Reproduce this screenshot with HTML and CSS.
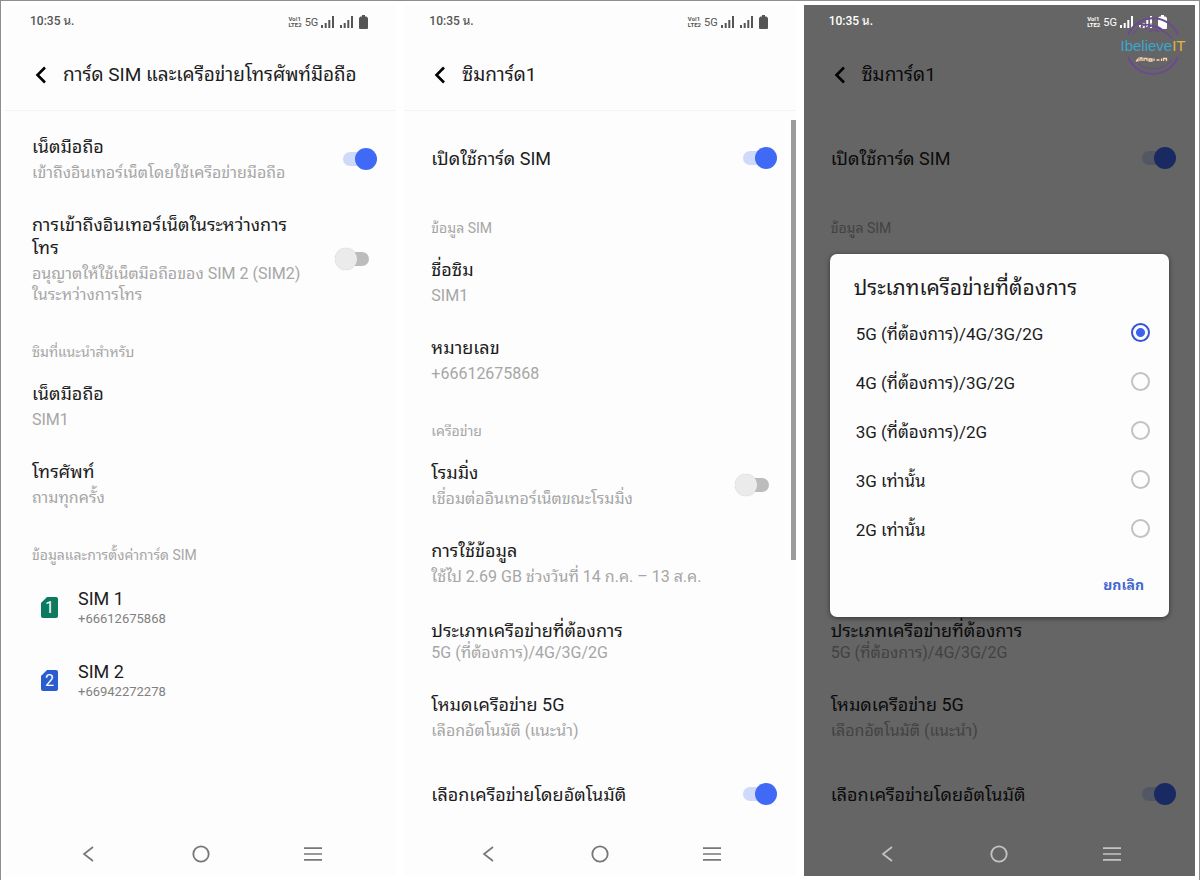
FILE: index.html
```html
<!DOCTYPE html>
<html lang="th">
<head>
<meta charset="utf-8">
<meta name="viewport" content="width=device-width, initial-scale=1">
<title>การ์ด SIM และเครือข่ายโทรศัพท์มือถือ</title>
<link rel="stylesheet" href="styles.css">
</head>
<body>
<svg class="defs" aria-hidden="true">
  <symbol id="i-signal" viewBox="0 0 13 12"><path d="M0 9h2v3H0zM3.700 7h2v5h-2zM7.300 4h2v8h-2zM11 0h2v12h-2z"/></symbol>
  <symbol id="i-battery" viewBox="0 0 9 14"><path d="M3 0h3v1.500h1.500L9 3v10q0 1-1 1H1q-1 0-1-1V3l1.500-1.500H3z"/></symbol>
  <symbol id="i-back" viewBox="0 0 12 18"><path d="M10 1.500 2.500 9l7.500 7.500" fill="none" stroke="currentColor" stroke-width="2.600"/></symbol>
  <symbol id="i-nav-back" viewBox="0 0 12 16"><path d="M11 1 2 8l9 7" fill="none" stroke="currentColor" stroke-width="1.700"/></symbol>
  <symbol id="i-nav-home" viewBox="0 0 18 18"><circle cx="9" cy="9" r="7.700" fill="none" stroke="currentColor" stroke-width="1.800"/></symbol>
  <symbol id="i-nav-menu" viewBox="0 0 18 14"><path d="M0 1.200h18M0 7h18M0 12.800h18" fill="none" stroke="currentColor" stroke-width="1.700"/></symbol>
  <symbol id="i-sim" viewBox="0 0 17 21"><path d="M6 0h9q2 0 2 2v17q0 2-2 2H2q-2 0-2-2V6z"/></symbol>
</svg>
<main class="frame">

  <section class="phone">
    <div class="status"><span class="clock">10:35 น.</span><span class="signals"><span class="volte"><span>Vo⁞1</span><span>LTE2</span></span><span class="net">5G</span><svg class="bars"><use href="#i-signal"/></svg><svg class="bars bars-2"><use href="#i-signal"/></svg><svg class="battery"><use href="#i-battery"/></svg></span></div>
    <header class="head"><button class="back" aria-label="กลับ"><svg><use href="#i-back"/></svg></button><h1>การ์ด SIM และเครือข่ายโทรศัพท์มือถือ</h1></header>
    <div class="list">
      <label class="row"><span class="texts"><span class="title">เน็ตมือถือ</span><span class="sub">เข้าถึงอินเทอร์เน็ตโดยใช้เครือข่ายมือถือ</span></span><input class="switch" type="checkbox" checked></label>
      <label class="row"><span class="texts"><span class="title">การเข้าถึงอินเทอร์เน็ตในระหว่างการ<br>โทร</span><span class="sub">อนุญาตให้ใช้เน็ตมือถือของ SIM 2 (SIM2)<br>ในระหว่างการโทร</span></span><input class="switch" type="checkbox"></label>
      <h2 class="group">ซิมที่แนะนำสำหรับ</h2>
      <div class="row"><span class="texts"><span class="title">เน็ตมือถือ</span><span class="sub">SIM1</span></span></div>
      <div class="row"><span class="texts"><span class="title">โทรศัพท์</span><span class="sub">ถามทุกครั้ง</span></span></div>
      <h2 class="group">ข้อมูลและการตั้งค่าการ์ด SIM</h2>
      <div class="sim sim-green"><span class="chip"><svg><use href="#i-sim"/></svg><span>1</span></span><span class="texts"><span class="title">SIM 1</span><span class="number">+66612675868</span></span></div>
      <div class="sim sim-blue"><span class="chip"><svg><use href="#i-sim"/></svg><span>2</span></span><span class="texts"><span class="title">SIM 2</span><span class="number">+66942272278</span></span></div>
    </div>
    <nav class="nav"><button aria-label="ย้อนกลับ"><svg class="n-back"><use href="#i-nav-back"/></svg></button><button aria-label="หน้าแรก"><svg class="n-home"><use href="#i-nav-home"/></svg></button><button aria-label="เมนู"><svg class="n-menu"><use href="#i-nav-menu"/></svg></button></nav>
  </section>

  <section class="phone">
    <div class="status"><span class="clock">10:35 น.</span><span class="signals"><span class="volte"><span>Vo⁞1</span><span>LTE2</span></span><span class="net">5G</span><svg class="bars"><use href="#i-signal"/></svg><svg class="bars bars-2"><use href="#i-signal"/></svg><svg class="battery"><use href="#i-battery"/></svg></span></div>
    <header class="head"><button class="back" aria-label="กลับ"><svg><use href="#i-back"/></svg></button><h1>ซิมการ์ด1</h1></header>
    <div class="list">
      <label class="row single"><span class="texts"><span class="title">เปิดใช้การ์ด SIM</span></span><input class="switch" type="checkbox" checked></label>
      <h2 class="group">ข้อมูล SIM</h2>
      <div class="row"><span class="texts"><span class="title">ชื่อซิม</span><span class="sub">SIM1</span></span></div>
      <div class="row"><span class="texts"><span class="title">หมายเลข</span><span class="sub">+66612675868</span></span></div>
      <h2 class="group">เครือข่าย</h2>
      <label class="row"><span class="texts"><span class="title">โรมมิ่ง</span><span class="sub">เชื่อมต่ออินเทอร์เน็ตขณะโรมมิ่ง</span></span><input class="switch" type="checkbox"></label>
      <div class="row"><span class="texts"><span class="title">การใช้ข้อมูล</span><span class="sub">ใช้ไป 2.69 GB ช่วงวันที่ 14 ก.ค. – 13 ส.ค.</span></span></div>
      <div class="row compact"><span class="texts"><span class="title">ประเภทเครือข่ายที่ต้องการ</span><span class="sub">5G (ที่ต้องการ)/4G/3G/2G</span></span></div>
      <div class="row"><span class="texts"><span class="title">โหมดเครือข่าย 5G</span><span class="sub">เลือกอัตโนมัติ (แนะนำ)</span></span></div>
      <label class="row single"><span class="texts"><span class="title">เลือกเครือข่ายโดยอัตโนมัติ</span></span><input class="switch" type="checkbox" checked></label>
      <div class="scrollbar"></div>
    </div>
    <nav class="nav"><button aria-label="ย้อนกลับ"><svg class="n-back"><use href="#i-nav-back"/></svg></button><button aria-label="หน้าแรก"><svg class="n-home"><use href="#i-nav-home"/></svg></button><button aria-label="เมนู"><svg class="n-menu"><use href="#i-nav-menu"/></svg></button></nav>
  </section>

  <section class="phone dimmed">
    <div class="status"><span class="clock">10:35 น.</span><span class="signals"><span class="volte"><span>Vo⁞1</span><span>LTE2</span></span><span class="net">5G</span><svg class="bars"><use href="#i-signal"/></svg><svg class="bars bars-2"><use href="#i-signal"/></svg><svg class="battery"><use href="#i-battery"/></svg></span></div>
    <header class="head"><button class="back" aria-label="กลับ"><svg><use href="#i-back"/></svg></button><h1>ซิมการ์ด1</h1></header>
    <div class="list">
      <label class="row single"><span class="texts"><span class="title">เปิดใช้การ์ด SIM</span></span><input class="switch" type="checkbox" checked></label>
      <h2 class="group">ข้อมูล SIM</h2>
      <div class="dialog" role="dialog" aria-labelledby="dlg-title">
        <h2 id="dlg-title">ประเภทเครือข่ายที่ต้องการ</h2>
        <label class="option"><span>5G (ที่ต้องการ)/4G/3G/2G</span><input type="radio" name="net" checked></label>
        <label class="option"><span>4G (ที่ต้องการ)/3G/2G</span><input type="radio" name="net"></label>
        <label class="option"><span>3G (ที่ต้องการ)/2G</span><input type="radio" name="net"></label>
        <label class="option"><span>3G เท่านั้น</span><input type="radio" name="net"></label>
        <label class="option"><span>2G เท่านั้น</span><input type="radio" name="net"></label>
        <button class="cancel">ยกเลิก</button>
      </div>
      <div class="row compact"><span class="texts"><span class="title">ประเภทเครือข่ายที่ต้องการ</span><span class="sub">5G (ที่ต้องการ)/4G/3G/2G</span></span></div>
      <div class="row"><span class="texts"><span class="title">โหมดเครือข่าย 5G</span><span class="sub">เลือกอัตโนมัติ (แนะนำ)</span></span></div>
      <label class="row single"><span class="texts"><span class="title">เลือกเครือข่ายโดยอัตโนมัติ</span></span><input class="switch" type="checkbox" checked></label>
    </div>
    <nav class="nav"><button aria-label="ย้อนกลับ"><svg class="n-back"><use href="#i-nav-back"/></svg></button><button aria-label="หน้าแรก"><svg class="n-home"><use href="#i-nav-home"/></svg></button><button aria-label="เมนู"><svg class="n-menu"><use href="#i-nav-menu"/></svg></button></nav>
    <div class="scrim"></div>
    <div class="logo">
      <svg viewBox="0 0 70 64" aria-hidden="true">
        <g fill="none" stroke="#6b4a91" stroke-width="2">
          <path d="M10 21A27 27 0 0 1 60 21M10 43A27 27 0 0 0 60 43"/>
          <path d="M14 22A22 22 0 0 1 34 10M16 45A23 23 0 0 0 54 45" stroke-width="1"/>
          <path d="M27 15q8-7 18 1M31 18q5-4 10 0M20 10q20 0 34 14" stroke-width="1.500"/>
        </g>
        <path d="M18 47.500l2-2.500v2.500M22 47v-3h2v3M26 47v-2.500h3v2.500M31 45h3v2h-3zM36 44.500v2.500M38.500 46h3M43.500 44.500v2.500M45.500 47v-2.500h3v2.500" fill="none" stroke="#f5d3b2" stroke-width="1.300"/>
      </svg>
      <span class="brand">Ibelieve<b>IT</b></span>
    </div>
  </section>
</main>
</body>
</html>
```
FILE: styles.css
```css
* { box-sizing: border-box; }

body {
  margin: 0;
  background: #fff;
  color: #1c1c1c;
  font-family: Roboto, "Noto Sans Thai Looped", "Noto Looped Thai", "Droid Sans Thai", "Noto Sans Thai", "Noto Sans", sans-serif;
}

h1, h2 { margin: 0; font-weight: 400; }

button {
  padding: 0;
  border: 0;
  background: none;
  color: inherit;
  font: inherit;
}

svg { display: block; fill: currentColor; }
.defs { position: absolute; width: 0; height: 0; }

.frame {
  display: grid;
  grid-template-columns: repeat(3, minmax(0, 1fr));
  gap: 8px;
  min-height: 100vh;
  padding: 4px;
  border: 1px solid #8e8e8e;
}

.phone {
  position: relative;
  display: flex;
  flex-direction: column;
  background: #fdfdfd;
}

/* Status bar */
.status {
  display: flex;
  align-items: center;
  justify-content: space-between;
  height: 34px;
  padding: 0 28px 0 25px;
  color: #555;
  font-size: 12px;
  font-weight: 500;
}
.clock { line-height: 16px; padding-bottom: 2px; }
.signals { display: flex; align-items: center; }
.volte {
  display: grid;
  font-size: 6px;
  font-weight: 700;
  line-height: 6px;
  margin-right: 3px;
}
.net { font-size: 11px; font-weight: 400; margin-right: 3px; }
.bars { width: 13px; height: 12px; }
.bars-2 { margin: 0 6px; }
.battery { width: 9px; height: 14px; }

/* Title bar */
.head {
  display: flex;
  align-items: center;
  gap: 16px;
  height: 72px;
  padding: 0 30px;
  border-bottom: 1px solid #f3f3f3;
}
.back svg { width: 12px; height: 18px; color: #000; }
.head h1 {
  font-size: 19px;
  line-height: 28px;
  white-space: nowrap;
}

/* Settings list */
.list {
  position: relative;
  flex: 1;
  padding-top: 9px;
}
.row {
  display: flex;
  align-items: center;
  justify-content: space-between;
  padding: 15px 27px;
}
.texts { display: flex; flex-direction: column; gap: 4px; white-space: nowrap; }
.title { font-size: 18px; line-height: 23px; }
.sub { color: #a6a6a6; font-size: 16px; line-height: 21px; }
.single { height: 76px; }
.compact { padding: 17px 27px 15px; }
.compact .texts { gap: 0; }
.group {
  padding: 22px 27px 4px;
  color: #a6a6a6;
  font-size: 14px;
  line-height: 21px;
}

.switch {
  appearance: none;
  position: relative;
  flex: none;
  width: 26px;
  height: 14px;
  margin: 0;
  border-radius: 7px;
  background: #bcbcbc;
}
.switch::before {
  content: "";
  position: absolute;
  top: -4px;
  left: -8px;
  width: 22px;
  height: 22px;
  border-radius: 50%;
  background: #ebebeb;
  box-shadow: 0 0 1px #bbb;
}
.switch:checked { background: #cfdafa; }
.switch:checked::before { left: 12px; background: #4069f6; box-shadow: none; }

.sim {
  display: flex;
  align-items: center;
  gap: 20px;
  padding: 17px 36px 15px;
}
.sim .texts { gap: 0; }
.number { color: #808080; font-size: 13px; line-height: 18px; }
.chip { display: grid; place-items: center; color: #fff; font-size: 16px; line-height: 21px; }
.chip > * { grid-area: 1 / 1; }
.chip svg { width: 17px; height: 21px; }
.sim-green svg { color: #0b7a5e; }
.sim-blue svg { color: #2a5bcf; }

.scrollbar {
  position: absolute;
  top: 9px;
  right: 0;
  width: 5px;
  height: 61%;
  background: #9c9c9c;
}

/* System navigation */
.nav {
  display: grid;
  grid-template-columns: repeat(3, 1fr);
  place-items: center;
  height: 44px;
  padding: 0 27px;
  color: #777;
}
.n-back { width: 12px; height: 16px; }
.n-home { width: 18px; height: 18px; }
.n-menu { width: 18px; height: 14px; }

/* Screen behind the dialog */
.scrim { position: absolute; inset: 0; background: rgba(0, 0, 0, 0.6); }
.dimmed .status { position: relative; z-index: 1; color: #fff; }
.dimmed .nav { position: relative; z-index: 1; color: #c4c4c4; }
.dimmed .head { border-color: transparent; }

.dialog {
  position: relative;
  z-index: 1;
  display: flex;
  flex-direction: column;
  margin: 11px 26px -15px;
  padding: 19px 19px 20px 24px;
  border-radius: 7px;
  background: #fdfdfd;
  box-shadow: 0 1px 5px rgba(0, 0, 0, 0.5);
}
.dialog h2 { font-size: 21px; line-height: 30px; margin-bottom: 5px; white-space: nowrap; }
.option {
  display: flex;
  align-items: center;
  justify-content: space-between;
  height: 49px;
  padding-left: 2px;
  font-size: 17px;
}
.option input {
  appearance: none;
  width: 19px;
  height: 19px;
  margin: 0;
  border: 2px solid #c2c2c2;
  border-radius: 50%;
}
.option input:checked {
  border-color: #3454d8;
  background: radial-gradient(circle, #3c63f0 0 4px, transparent 5px);
}
.cancel {
  align-self: flex-end;
  margin: 20px 6px 0 0;
  color: #4468cf;
  font-size: 14px;
  font-weight: 700;
  line-height: 24px;
}

/* Watermark */
.logo {
  position: absolute;
  z-index: 2;
  top: 9px;
  right: 7px;
  display: grid;
  place-items: center;
}
.logo > * { grid-area: 1 / 1; }
.logo svg { width: 70px; height: 64px; }
.brand {
  color: #3aa5cf;
  font-family: "Liberation Sans", sans-serif;
  font-size: 15px;
  line-height: 16px;
}
.brand b { color: #e5b53c; font-weight: 400; }
```
